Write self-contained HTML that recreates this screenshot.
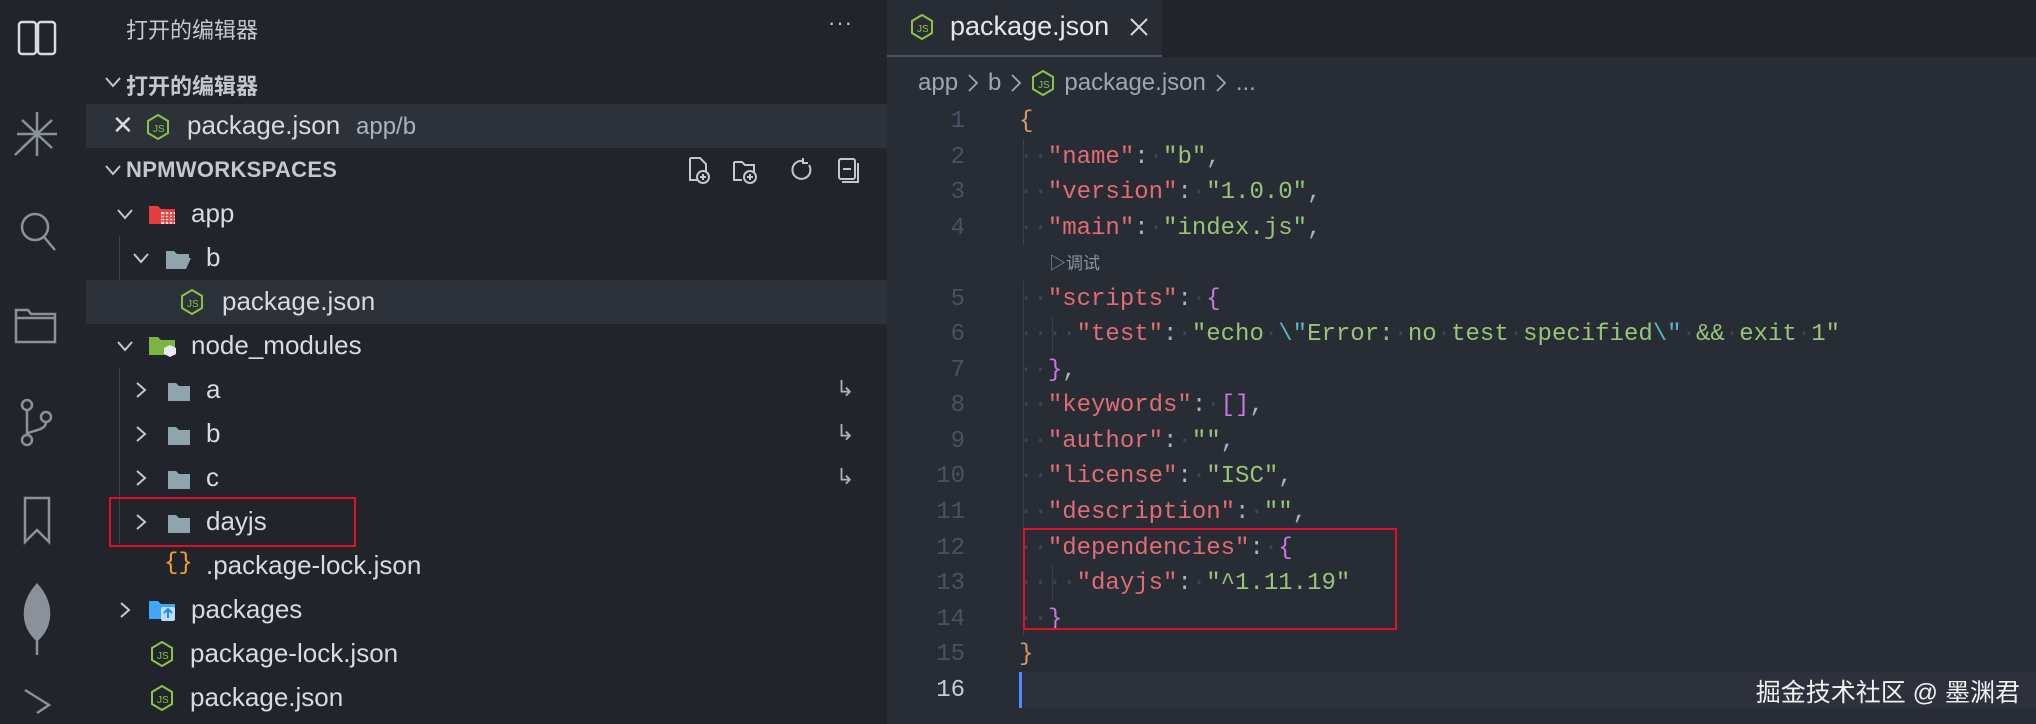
<!DOCTYPE html>
<html><head><meta charset="utf-8"><style>
*{margin:0;padding:0;box-sizing:border-box}
body{width:2036px;height:724px;background:#282c34;overflow:hidden;position:relative;font-family:"Liberation Sans","Noto Sans CJK SC",sans-serif;color:#d7dae0}
.abs{position:absolute}
#act{left:0;top:0;width:86px;height:724px;background:#21252b}
#side{left:86px;top:0;width:801px;height:724px;background:#21252b}
.row{position:absolute;left:86px;width:801px;height:44px;display:flex;align-items:center;font-size:26px;color:#d7dae0}
.row .t{top:6px}
.sel{background:#2c313a}
.chev{position:absolute;width:22px;height:22px}
.ic{position:absolute}
.t{position:absolute;white-space:nowrap}
#tabs{left:887px;top:0;width:1149px;height:57px;background:#21252b}
#tab{left:887px;top:0;width:275px;height:57px;background:#282c34;border-bottom:2px solid #4d5360}
#code{left:887px;top:104px;width:1149px;font-family:"Liberation Mono",monospace;font-size:24px;line-height:35.56px}
.ln{position:absolute;left:0;width:78px;text-align:right;color:#495162}
.cl{position:absolute;left:132px;white-space:pre;color:#abb2bf}
.k{color:#e06c75}.s{color:#98c379}.d{color:#3e4451}.o{color:#d19a66}.p{color:#c678dd}
</style></head><body>
<div id="act" class="abs"></div>
<div id="side" class="abs"></div>
<svg class="abs" style="left:0;top:0" width="86" height="724" fill="none" stroke="#d7dae0" stroke-width="2.5">
<rect x="19" y="22" width="17" height="32" rx="3"/><rect x="38" y="22" width="17" height="32" rx="3"/>
<g stroke="#8b919a"><path d="M37 112v44M17 134h40M22 120l30 28M52 120l-30 28M15 155l22-21"/></g>
<g stroke="#8b919a"><circle cx="35" cy="227" r="13"/><path d="M44 237l11 13"/></g>
<g stroke="#8b919a"><path d="M16 310h12l3 4h24v28H16z M16 318h39"/></g>
<g stroke="#8b919a"><circle cx="27" cy="405" r="5"/><circle cx="27" cy="440" r="5"/><circle cx="46" cy="417" r="5"/><path d="M27 410v25M46 422c0 10-19 8-19 13"/></g>
<g stroke="#8b919a"><path d="M25 498h24v44l-12-12-12 12z"/></g>
<path d="M37 585c-16 18-16 40 0 55 16-15 16-37 0-55zM37 600v55" fill="#8b919a" stroke="#8b919a"/>
<g stroke="#8b919a"><path d="M25 690l24 15-12 8"/></g>
</svg>
<div class="abs" style="left:86px;top:0;width:801px;height:60px;background:#21252b"></div>
<div class="t" style="left:126px;top:13px;font-size:22px;color:#c3c7ce">打开的编辑器</div>
<div class="t" style="left:828px;top:10px;font-size:22px;color:#c3c7ce;letter-spacing:1px">···</div>
<div class="row" style="top:60px"><svg class="chev" style="left:16px;top:11px" viewBox="0 0 22 22"><path d="M4 7l7 8 7-8" stroke="#c3c7ce" stroke-width="2" fill="none"/></svg><span class="t" style="left:40px;top:9px;font-size:22px;font-weight:bold;color:#c3c7ce">打开的编辑器</span></div>
<div class="row sel" style="top:104px"><span class="t" style="left:26px;top:6px;font-size:26px;color:#d7dae0">✕</span>
<svg class="ic" style="left:60px;top:10px" width="24" height="26" viewBox="0 0 24 26"><path d="M12 1l10 6v12l-10 6-10-6V7z" fill="none" stroke="#8bc34a" stroke-width="2"/><text x="7" y="18" font-size="10" fill="#8bc34a" font-family="Liberation Sans">JS</text></svg>
<span class="t" style="left:101px;top:6px;font-size:26px">package.json</span><span class="t" style="left:270px;top:9px;font-size:24px;color:#abb2bf">app/b</span></div>
<div class="row" style="top:148px"><svg class="chev" style="left:16px;top:11px" viewBox="0 0 22 22"><path d="M4 7l7 8 7-8" stroke="#c3c7ce" stroke-width="2" fill="none"/></svg><span class="t" style="left:40px;top:9px;font-size:22px;font-weight:bold;color:#c3c7ce;letter-spacing:.3px">NPMWORKSPACES</span>
<svg class="ic" style="left:600px;top:8px" width="270" height="30" fill="none" stroke="#c3c7ce" stroke-width="2"><path d="M4 2h10l6 6v8M4 2v22h7"/><circle cx="17" cy="21" r="6"/><path d="M17 18v6M14 21h6"/><path d="M48 6h8l3 3h9v7M48 6v18h8"/><circle cx="64" cy="21" r="6"/><path d="M64 18v6M61 21h6"/><path d="M117 5a9 9 0 1 0 6 4M117 2v5h5"/><rect x="153" y="3" width="16" height="20" rx="2"/><path d="M157 13h8M156 26h16V7"/></svg></div>
<div class="abs" style="left:119px;top:236px;width:1px;height:88px;background:#3b4048"></div>
<div class="abs" style="left:136px;top:280px;width:1px;height:44px;background:#3b4048"></div>
<div class="abs" style="left:119px;top:368px;width:1px;height:176px;background:#3b4048"></div>
<div class="row" style="top:192px"><svg class="chev" style="left:28px;top:11px" viewBox="0 0 22 22"><path d="M4 7l7 8 7-8" stroke="#c3c7ce" stroke-width="2" fill="none"/></svg><svg class="ic" style="left:62px;top:11px" width="30" height="22"><path d="M1 3h9l3 3h14v15H1z" fill="#e53e3e"/><path d="M13 9h14v12H13z" fill="#fff" opacity=".8"/><path d="M13 12h14M13 15h14M13 18h14M17 9v12M21 9v12M25 9v12" stroke="#e53e3e" stroke-width="1.5"/></svg><span class="t" style="left:105px">app</span></div>
<div class="row" style="top:236px"><svg class="chev" style="left:44px;top:11px" viewBox="0 0 22 22"><path d="M4 7l7 8 7-8" stroke="#c3c7ce" stroke-width="2" fill="none"/></svg><svg class="ic" style="left:78px;top:12px" width="28" height="22"><path d="M2 3h8l3 3h12v4H7l-5 11z M7 10h20l-5 11H2z" fill="#90a4ae"/></svg><span class="t" style="left:120px">b</span></div>
<div class="row sel" style="top:280px"><svg class="ic" style="left:94px;top:9px" width="24" height="26" viewBox="0 0 24 26"><path d="M12 1l10 6v12l-10 6-10-6V7z" fill="none" stroke="#8bc34a" stroke-width="2"/><text x="7" y="18" font-size="10" fill="#8bc34a">JS</text></svg><span class="t" style="left:136px">package.json</span></div>
<div class="row" style="top:324px"><svg class="chev" style="left:28px;top:11px" viewBox="0 0 22 22"><path d="M4 7l7 8 7-8" stroke="#c3c7ce" stroke-width="2" fill="none"/></svg><svg class="ic" style="left:62px;top:10px" width="30" height="24"><path d="M1 3h9l3 3h14v15H1z" fill="#7cb342"/><path d="M22 11l6 3v6l-6 3-6-3v-6z" fill="#e8eaed"/></svg><span class="t" style="left:105px">node_modules</span></div>
<div class="row" style="top:368px"><svg class="chev" style="left:44px;top:11px" viewBox="0 0 22 22"><path d="M7 4l8 7-8 7" stroke="#c3c7ce" stroke-width="2" fill="none"/></svg><svg class="ic" style="left:80px;top:12px" width="26" height="22"><path d="M2 3h8l3 3h11v15H2z" fill="#90a4ae"/></svg><span class="t" style="left:120px">a</span><span class="t" style="left:750px;font-size:22px;top:8px;color:#abb2bf">↳</span></div>
<div class="row" style="top:412px"><svg class="chev" style="left:44px;top:11px" viewBox="0 0 22 22"><path d="M7 4l8 7-8 7" stroke="#c3c7ce" stroke-width="2" fill="none"/></svg><svg class="ic" style="left:80px;top:12px" width="26" height="22"><path d="M2 3h8l3 3h11v15H2z" fill="#90a4ae"/></svg><span class="t" style="left:120px">b</span><span class="t" style="left:750px;font-size:22px;top:8px;color:#abb2bf">↳</span></div>
<div class="row" style="top:456px"><svg class="chev" style="left:44px;top:11px" viewBox="0 0 22 22"><path d="M7 4l8 7-8 7" stroke="#c3c7ce" stroke-width="2" fill="none"/></svg><svg class="ic" style="left:80px;top:12px" width="26" height="22"><path d="M2 3h8l3 3h11v15H2z" fill="#90a4ae"/></svg><span class="t" style="left:120px">c</span><span class="t" style="left:750px;font-size:22px;top:8px;color:#abb2bf">↳</span></div>
<div class="row" style="top:500px"><svg class="chev" style="left:44px;top:11px" viewBox="0 0 22 22"><path d="M7 4l8 7-8 7" stroke="#c3c7ce" stroke-width="2" fill="none"/></svg><svg class="ic" style="left:80px;top:12px" width="26" height="22"><path d="M2 3h8l3 3h11v15H2z" fill="#90a4ae"/></svg><span class="t" style="left:120px">dayjs</span></div>
<div class="row" style="top:544px"><span class="t" style="left:78px;top:6px;color:#f0a030;font-family:'Liberation Mono',monospace;font-size:24px">{}</span><span class="t" style="left:120px">.package-lock.json</span></div>
<div class="row" style="top:588px"><svg class="chev" style="left:28px;top:11px" viewBox="0 0 22 22"><path d="M7 4l8 7-8 7" stroke="#c3c7ce" stroke-width="2" fill="none"/></svg><svg class="ic" style="left:62px;top:10px" width="30" height="24"><path d="M1 3h9l3 3h14v15H1z" fill="#42a5f5"/><rect x="13" y="9" width="14" height="14" rx="2" fill="#bbdefb"/><path d="M20 20v-8M16 15l4-4 4 4" stroke="#1e88e5" stroke-width="2" fill="none"/></svg><span class="t" style="left:105px">packages</span></div>
<div class="row" style="top:632px"><svg class="ic" style="left:64px;top:9px" width="24" height="26" viewBox="0 0 24 26"><path d="M12 1l10 6v12l-10 6-10-6V7z" fill="none" stroke="#8bc34a" stroke-width="2"/><text x="7" y="18" font-size="10" fill="#8bc34a">JS</text></svg><span class="t" style="left:104px">package-lock.json</span></div>
<div class="row" style="top:676px"><svg class="ic" style="left:64px;top:9px" width="24" height="26" viewBox="0 0 24 26"><path d="M12 1l10 6v12l-10 6-10-6V7z" fill="none" stroke="#8bc34a" stroke-width="2"/><text x="7" y="18" font-size="10" fill="#8bc34a">JS</text></svg><span class="t" style="left:104px">package.json</span></div>
<div class="abs" style="left:109px;top:497px;width:247px;height:50px;border:2px solid #e0102a"></div>
<div id="tabs" class="abs"></div>
<div id="tab" class="abs"></div>
<svg class="abs" style="left:910px;top:14px" width="24" height="26" viewBox="0 0 24 26"><path d="M12 1l10 6v12l-10 6-10-6V7z" fill="none" stroke="#8bc34a" stroke-width="2"/><text x="7" y="18" font-size="10" fill="#8bc34a">JS</text></svg>
<div class="t" style="left:950px;top:11px;font-size:27px;color:#e6e6e6">package.json</div>
<svg class="abs" style="left:1128px;top:16px" width="22" height="22"><path d="M3 3l16 16M19 3L3 19" stroke="#d7dae0" stroke-width="2"/></svg>
<div class="t" style="left:918px;top:69px;font-size:24px;color:#a0a6b0;display:flex;align-items:center;gap:9px">
<span>app</span><svg width="12" height="22"><path d="M2 3l8 8-8 8" stroke="#a0a6b0" stroke-width="1.8" fill="none"/></svg><span>b</span><svg width="12" height="22"><path d="M2 3l8 8-8 8" stroke="#a0a6b0" stroke-width="1.8" fill="none"/></svg><svg width="24" height="26" viewBox="0 0 24 26"><path d="M12 1l10 6v12l-10 6-10-6V7z" fill="none" stroke="#8bc34a" stroke-width="2"/><text x="7" y="18" font-size="10" fill="#8bc34a">JS</text></svg><span>package.json</span><svg width="12" height="22"><path d="M2 3l8 8-8 8" stroke="#a0a6b0" stroke-width="1.8" fill="none"/></svg><span>...</span></div>
<div class="abs" style="left:1023px;top:672px;width:1013px;height:36px;background:#2c313c"></div>
<div class="abs" style="left:1019px;top:672px;width:3px;height:36px;background:#528bff"></div>
<div class="abs" style="left:1023px;top:139px;width:1px;height:106px;background:#3b4048"></div>
<div class="abs" style="left:1023px;top:281px;width:1px;height:355px;background:#3b4048"></div>
<div class="abs" style="left:1052px;top:317px;width:1px;height:36px;background:#3b4048"></div>
<div class="abs" style="left:1052px;top:566px;width:1px;height:36px;background:#3b4048"></div>
<div id="code" class="abs">
<div style="position:relative;height:35.56px"><span class="ln">1</span><span class="cl"><span class="o">{</span></span></div>
<div style="position:relative;height:35.56px"><span class="ln">2</span><span class="cl"><span class="d">··</span><span class="k">"name"</span>:<span class="d">·</span><span class="s">"b"</span>,</span></div>
<div style="position:relative;height:35.56px"><span class="ln">3</span><span class="cl"><span class="d">··</span><span class="k">"version"</span>:<span class="d">·</span><span class="s">"1.0.0"</span>,</span></div>
<div style="position:relative;height:35.56px"><span class="ln">4</span><span class="cl"><span class="d">··</span><span class="k">"main"</span>:<span class="d">·</span><span class="s">"index.js"</span>,</span></div>
<div style="position:relative;height:35.56px"><span class="cl" style="left:162px;font-family:'Liberation Sans','Noto Sans CJK SC',sans-serif;font-size:17px;color:#8b919a">▷调试</span></div>
<div style="position:relative;height:35.56px"><span class="ln">5</span><span class="cl"><span class="d">··</span><span class="k">"scripts"</span>:<span class="d">·</span><span class="p">{</span></span></div>
<div style="position:relative;height:35.56px"><span class="ln">6</span><span class="cl"><span class="d">····</span><span class="k">"test"</span>:<span class="d">·</span><span class="s">"echo<span class="d">·</span><span style="color:#56b6c2">\"</span>Error:<span class="d">·</span>no<span class="d">·</span>test<span class="d">·</span>specified<span style="color:#56b6c2">\"</span><span class="d">·</span>&amp;&amp;<span class="d">·</span>exit<span class="d">·</span>1"</span></span></div>
<div style="position:relative;height:35.56px"><span class="ln">7</span><span class="cl"><span class="d">··</span><span class="p">}</span>,</span></div>
<div style="position:relative;height:35.56px"><span class="ln">8</span><span class="cl"><span class="d">··</span><span class="k">"keywords"</span>:<span class="d">·</span><span class="p">[]</span>,</span></div>
<div style="position:relative;height:35.56px"><span class="ln">9</span><span class="cl"><span class="d">··</span><span class="k">"author"</span>:<span class="d">·</span><span class="s">""</span>,</span></div>
<div style="position:relative;height:35.56px"><span class="ln">10</span><span class="cl"><span class="d">··</span><span class="k">"license"</span>:<span class="d">·</span><span class="s">"ISC"</span>,</span></div>
<div style="position:relative;height:35.56px"><span class="ln">11</span><span class="cl"><span class="d">··</span><span class="k">"description"</span>:<span class="d">·</span><span class="s">""</span>,</span></div>
<div style="position:relative;height:35.56px"><span class="ln">12</span><span class="cl"><span class="d">··</span><span class="k">"dependencies"</span>:<span class="d">·</span><span class="p">{</span></span></div>
<div style="position:relative;height:35.56px"><span class="ln">13</span><span class="cl"><span class="d">····</span><span class="k">"dayjs"</span>:<span class="d">·</span><span class="s">"^1.11.19"</span></span></div>
<div style="position:relative;height:35.56px"><span class="ln">14</span><span class="cl"><span class="d">··</span><span class="p">}</span></span></div>
<div style="position:relative;height:35.56px"><span class="ln">15</span><span class="cl"><span class="o">}</span></span></div>
<div style="position:relative;height:35.56px"><span class="ln" style="color:#c8ccd4">16</span></div>
</div>
<div class="abs" style="left:1023px;top:528px;width:374px;height:102px;border:2px solid #e0102a"></div>
<div class="t" style="right:16px;top:673px;font-size:25px;color:#f0f0f0">掘金技术社区 @ 墨渊君</div>
</body></html>
